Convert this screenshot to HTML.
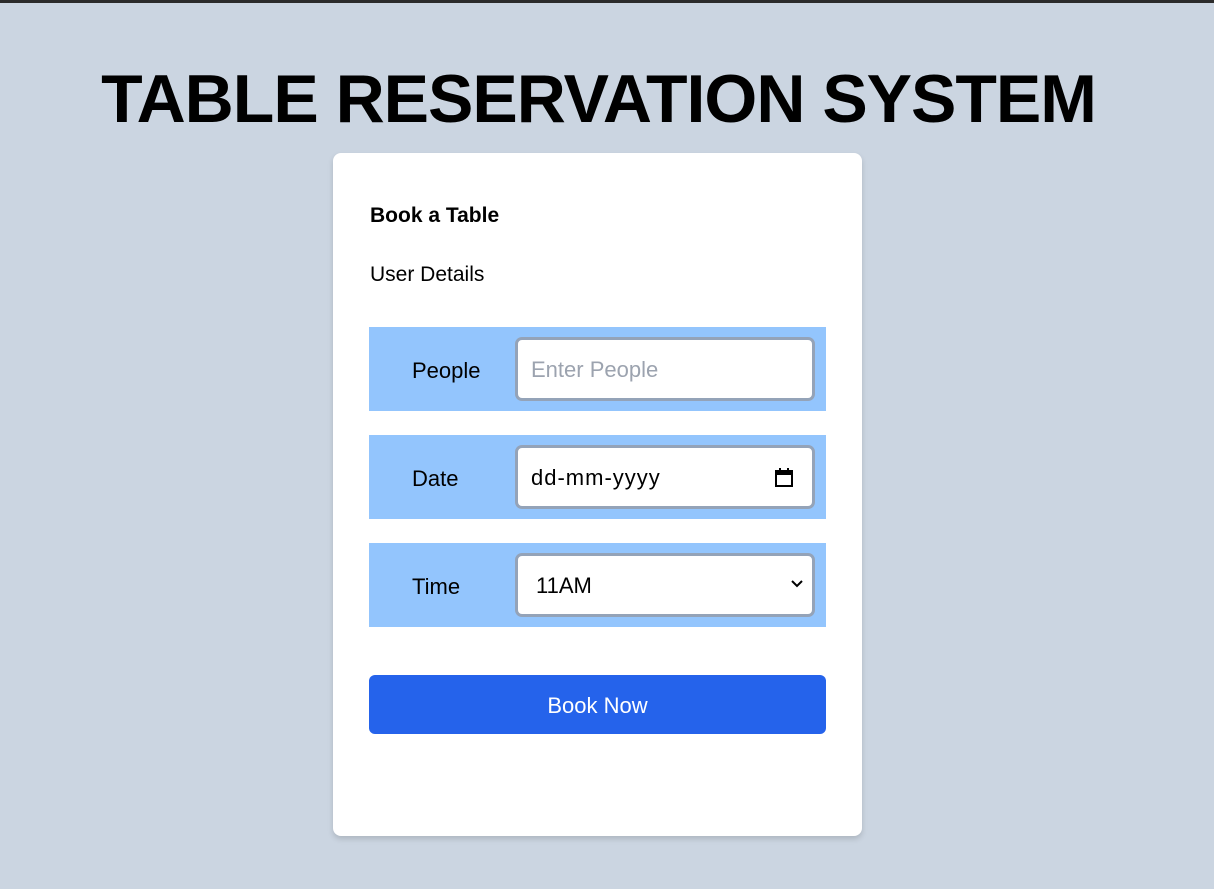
<!DOCTYPE html>
<html><head><style>
body{margin:0;width:1214px;height:889px;background:#cbd5e1;font-family:"Liberation Sans",sans-serif;position:relative;overflow:hidden}
.top{position:absolute;left:0;top:0;width:1214px;height:3px;background:#2b2b2b}
h1{position:absolute;left:0;width:1197px;top:63px;margin:0;text-align:center;font-size:68px;font-weight:bold;line-height:72px;color:#000;letter-spacing:-1px}
.card{position:absolute;left:333px;top:153px;width:529px;height:683px;background:#fff;border-radius:8px;box-shadow:0 3px 6px rgba(0,0,0,.15)}
.abs{position:absolute}
.t1{left:37px;top:51px;font-size:21px;font-weight:bold}
.t2{left:37px;top:110px;font-size:21px}
.row{position:absolute;left:36px;width:457px;height:84px;background:#93c5fd}
.row .lab{position:absolute;left:43px;top:31px;font-size:22px}
.row .inp{position:absolute;left:146px;top:10px;width:294px;height:58px;border:3px solid #94a3b8;border-radius:7px;background:#fff;font-size:22px;line-height:60px;padding-left:0}
.btn{position:absolute;left:36px;top:522px;width:457px;height:59px;background:#2563eb;border-radius:6px;color:#fff;font-size:22px;text-align:center;line-height:62px}
</style></head><body>
<div class="top"></div>
<h1>TABLE RESERVATION SYSTEM</h1>
<div class="card">
<div class="abs t1">Book a Table</div>
<div class="abs t2">User Details</div>
<div class="row" style="top:174px"><div class="lab">People</div><div class="inp"><span style="margin-left:13px;color:#9ca3af">Enter People</span></div></div>
<div class="row" style="top:282px"><div class="lab">Date</div><div class="inp"><span style="margin-left:13px;letter-spacing:1px">dd-mm-yyyy</span>
<svg style="position:absolute;right:18px;top:20px" width="20" height="20" viewBox="0 0 20 20"><rect x="2" y="3" width="16" height="15" fill="none" stroke="#000" stroke-width="2"/><rect x="2" y="3" width="16" height="4" fill="#000"/><rect x="5" y="0" width="2" height="4" fill="#000"/><rect x="13" y="0" width="2" height="4" fill="#000"/></svg></div></div>
<div class="row" style="top:390px"><div class="lab">Time</div><div class="inp"><span style="margin-left:18px">11AM</span>
<svg style="position:absolute;right:8px;top:23px" width="14" height="10" viewBox="0 0 14 10"><path d="M2 2l5 5 5-5" fill="none" stroke="#000" stroke-width="2"/></svg></div></div>
<div class="btn">Book Now</div>
</div>
</body></html>
